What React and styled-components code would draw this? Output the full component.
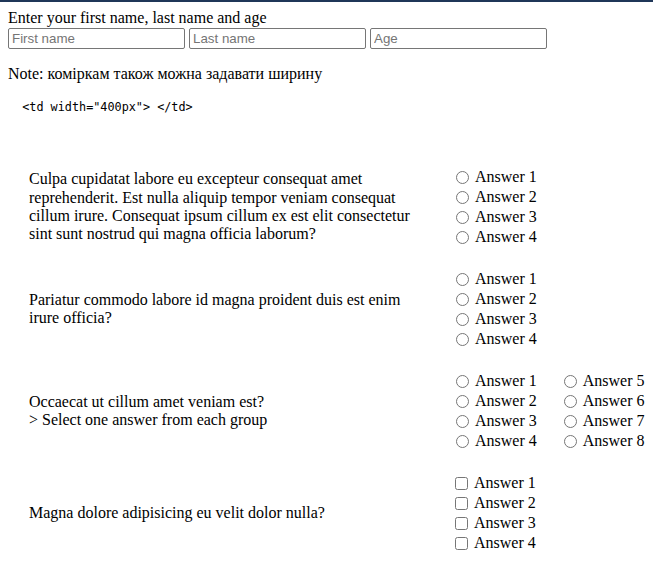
import React from "react";
import styled, { createGlobalStyle } from "styled-components";

const GlobalStyle = createGlobalStyle`
  html {
    border-top: 2px solid #1f3658;
    background: white;
  }
  body {
    margin: 6px 8px 8px;
    font-family: "Liberation Serif", "Times New Roman", serif;
    font-size: 16px;
    color: #000;
  }
`;

const Intro = styled.div`
  padding-top: 1px;
  line-height: 18px;
`;

const InputRow = styled.div`
  display: flex;
  gap: 4px;
  margin-top: 1px;
`;

const TextInput = styled.input`
  box-sizing: border-box;
  width: 177px;
  height: 21px;
  padding: 1px 3px;
  border: 1px solid #767676;
  border-radius: 2px;
  font-family: "Liberation Sans", Arial, sans-serif;
  font-size: 13.33px;

  &::placeholder {
    color: #757575;
  }
`;

const Note = styled.p`
  margin: 16px 0 17px;
  line-height: 18px;
`;

const Code = styled.pre`
  margin: 0;
  font-family: "DejaVu Sans Mono", "Liberation Mono", monospace;
  font-size: 11.8px;
  line-height: 14px;
  color: #000;
`;

const Questions = styled.div`
  display: grid;
  grid-template-columns: 400px max-content max-content;
  column-gap: 22px;
  row-gap: 22px;
  align-items: center;
  margin: 53px 0 0 21px;
`;

const Question = styled.div`
  grid-column: 1;
  line-height: 18.4px;
`;

const Group = styled.div`
  display: flex;
  flex-direction: column;
`;

const Answer = styled.label`
  display: flex;
  align-items: center;
  height: 20px;
  white-space: nowrap;
`;

const Choice = styled.input`
  width: 13px;
  height: 13px;
  margin: 0 6px 0 ${p => (p.type === "checkbox" ? "4px" : "5px")};
  accent-color: #767676;
`;

const AnswerGroup = ({ name, from, type = "radio" }) => (
  <Group>
    {[0, 1, 2, 3].map(i => (
      <Answer key={i}>
        <Choice type={type} name={name} />
        Answer {from + i}
      </Answer>
    ))}
  </Group>
);

const App = () => {
  return (
    <>
      <GlobalStyle />
      <Intro>Enter your first name, last name and age</Intro>
      <InputRow>
        <TextInput type="text" placeholder="First name" />
        <TextInput type="text" placeholder="Last name" />
        <TextInput type="text" placeholder="Age" />
      </InputRow>
      <Note>Note: коміркам також можна задавати ширину</Note>
      <Code>{'  <td width="400px"> </td>'}</Code>
      <Questions>
        <Question>
          Culpa cupidatat labore eu excepteur consequat amet reprehenderit. Est
          nulla aliquip tempor veniam consequat cillum irure. Consequat ipsum
          cillum ex est elit consectetur sint sunt nostrud qui magna officia
          laborum?
        </Question>
        <AnswerGroup name="q1" from={1} />
        <div />

        <Question>
          Pariatur commodo labore id magna proident duis est enim irure officia?
        </Question>
        <AnswerGroup name="q2" from={1} />
        <div />

        <Question>
          Occaecat ut cillum amet veniam est?
          <br />
          &gt; Select one answer from each group
        </Question>
        <AnswerGroup name="q3a" from={1} />
        <AnswerGroup name="q3b" from={5} />

        <Question>Magna dolore adipisicing eu velit dolor nulla?</Question>
        <AnswerGroup name="q4" from={1} type="checkbox" />
        <div />
      </Questions>
    </>
  );
};

export default App;
